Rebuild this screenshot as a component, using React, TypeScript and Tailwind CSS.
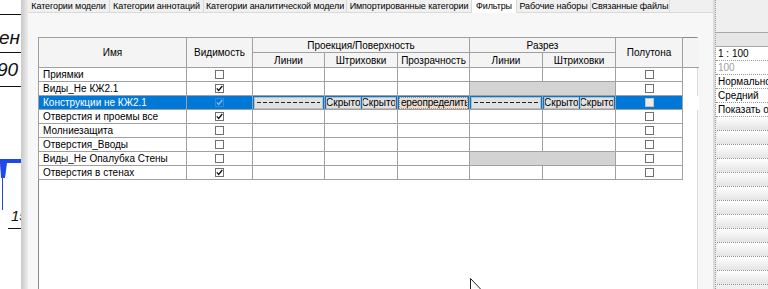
import React from "react";

type Row = { name: string; vis: boolean; hatch?: boolean; selected?: boolean };

const ROWS: Row[] = [
  { name: "Приямки", vis: false },
  { name: "Виды_Не КЖ2.1", vis: true, hatch: true },
  { name: "Конструкции не КЖ2.1", vis: true, selected: true },
  { name: "Отверстия и проемы все", vis: true },
  { name: "Молниезащита", vis: false },
  { name: "Отверстия_Вводы", vis: false },
  { name: "Виды_Не Опалубка Стены", vis: false, hatch: true },
  { name: "Отверстия в стенах", vis: true },
];

const TABS = [
  { label: "Категории модели", w: "w-[82px]" },
  { label: "Категории аннотаций", w: "w-[94px]" },
  { label: "Категории аналитической модели", w: "w-[143px]" },
  { label: "Импортированные категории", w: "w-[125px]" },
  { label: "Фильтры", w: "w-[45px]", active: true },
  { label: "Рабочие наборы", w: "w-[74px]" },
  { label: "Связанные файлы", w: "w-[79px]" },
];

const PROPS = [
  { text: "1 : 100" },
  { text: "100", muted: true },
  { text: "Нормально" },
  { text: "Средний" },
  { text: "Показать ор" },
];

const cell = "border border-[#a0a0a0] p-0";

const Box: React.FC<{ checked: boolean; tone?: "normal" | "selVis" | "selHalf" }> = ({
  checked,
  tone = "normal",
}) => {
  const boxCls =
    tone === "selVis"
      ? "border-[#2f8ae0] bg-transparent"
      : tone === "selHalf"
        ? "border-[#c4c4c4] bg-[#ebebeb]"
        : "border-[#707070] bg-white";
  const stroke = tone === "selVis" ? "#8cbde9" : "#111";
  return (
    <div className={`mx-auto w-[9px] h-[9px] border ${boxCls} flex items-center justify-center`}>
      {checked && (
        <svg width="7" height="7" viewBox="0 0 7 7">
          <path d="M0.8 3.4 L2.7 5.4 L6.3 1" fill="none" stroke={stroke} strokeWidth="1.3" />
        </svg>
      )}
    </div>
  );
};

const DashBtn = () => (
  <div className="h-[12px] mx-[1px] bg-[#e1e1e1] border border-[#bcbcbc] flex items-center px-[2px]">
    <svg className="w-full h-[3px]">
      <line x1="0" y1="1.5" x2="100%" y2="1.5" stroke="#222" strokeWidth="1" strokeDasharray="4 2" />
    </svg>
  </div>
);

const HiddenPair = () => (
  <div className="h-[12px] mx-[1px] flex gap-px">
    <div className="flex-1 bg-[#e1e1e1] border border-[#bcbcbc] flex items-center justify-center text-black overflow-hidden">
      Скрыто
    </div>
    <div className="flex-1 bg-[#e1e1e1] border border-[#bcbcbc] flex items-center justify-center text-black overflow-hidden">
      Скрыто
    </div>
  </div>
);

const Drawing = () => (
  <div className="w-[21px] h-full bg-white shrink-0 overflow-hidden">
    <svg width="21" height="289" className="block">
      <line x1="0" y1="14.5" x2="21" y2="14.5" stroke="#111" />
      <text x="-1" y="44" fontSize="19" fontStyle="italic" fontFamily="Liberation Sans, sans-serif" fill="#111">
        ен
      </text>
      <line x1="0" y1="52.5" x2="21" y2="52.5" stroke="#111" />
      <text x="-3" y="76" fontSize="19" fontStyle="italic" fontFamily="Liberation Sans, sans-serif" fill="#111">
        90
      </text>
      <line x1="0" y1="86.5" x2="21" y2="86.5" stroke="#111" />
      <rect x="0" y="159" width="21" height="4" fill="#1f48e6" />
      <polygon points="0,163 7,163 5,178 1,178" fill="#1f48e6" />
      <line x1="2.5" y1="163" x2="2.5" y2="210" stroke="#1f48e6" />
      <text x="11" y="221" fontSize="15" fontStyle="italic" fontFamily="Liberation Sans, sans-serif" fill="#111">
        15
      </text>
      <line x1="8" y1="228.5" x2="21" y2="228.5" stroke="#111" />
    </svg>
  </div>
);

const App: React.FC = () => {
  return (
    <div className="relative w-[768px] h-[289px] overflow-hidden flex bg-white font-['Liberation_Sans',Arial,sans-serif] text-[10px] leading-[11px] text-black">
      <Drawing />
      {/* window shadow */}
      <div className="w-[7px] shrink-0 bg-gradient-to-r from-[#c9c9c9] to-[#ececec]" />

      {/* dialog */}
      <div className="w-[685px] shrink-0 flex flex-col bg-[#f7f7f7]">
        <div className="h-[13px] flex bg-[#f0f0f0] border-b border-[#dadada] text-[9px] tracking-[-0.1px]">
          {TABS.map((t) => (
            <div
              key={t.label}
              className={`${t.w} shrink-0 flex items-center justify-center whitespace-nowrap border-r border-[#d9d9d9] ${
                t.active ? "bg-white -mb-px" : "bg-[#f0f0f0]"
              }`}
            >
              {t.label}
            </div>
          ))}
        </div>

        <div className="flex-1 pl-[10px] pt-[24px] min-h-0">
          <div className="w-[660px] h-full bg-white border-l border-t border-r border-l-[#8a8a8a] border-t-[#8a8a8a] border-r-[#dcdcdc]">
            <table className="table-fixed border-collapse w-[660px] -mt-px -ml-px">
              <colgroup>
                <col className="w-[148px]" />
                <col className="w-[66px]" />
                <col className="w-[72px]" />
                <col className="w-[73px]" />
                <col className="w-[72px]" />
                <col className="w-[73px]" />
                <col className="w-[73px]" />
                <col className="w-[67px]" />
                <col className="w-[16px]" />
              </colgroup>
              <thead className="bg-[#f4f4f4]">
                <tr className="h-[15px]">
                  <th rowSpan={2} className={`${cell} font-normal`}>Имя</th>
                  <th rowSpan={2} className={`${cell} font-normal`}>Видимость</th>
                  <th colSpan={3} className={`${cell} font-normal`}>Проекция/Поверхность</th>
                  <th colSpan={2} className={`${cell} font-normal`}>Разрез</th>
                  <th rowSpan={2} className={`${cell} font-normal`}>Полутона</th>
                  <th rowSpan={2} className="border-b border-[#a0a0a0] p-0" />
                </tr>
                <tr className="h-[15px]">
                  <th className={`${cell} font-normal`}>Линии</th>
                  <th className={`${cell} font-normal`}>Штриховки</th>
                  <th className={`${cell} font-normal`}>Прозрачность</th>
                  <th className={`${cell} font-normal`}>Линии</th>
                  <th className={`${cell} font-normal`}>Штриховки</th>
                </tr>
              </thead>
              <tbody>
                {ROWS.map((r) =>
                  r.selected ? (
                    <tr key={r.name} className="h-[14px] bg-[#0078d7]">
                      <td className={`${cell} pl-[4px] text-white whitespace-nowrap`}>{r.name}</td>
                      <td className={cell}>
                        <Box checked tone="selVis" />
                      </td>
                      <td className={cell}>
                        <DashBtn />
                      </td>
                      <td className={cell}>
                        <HiddenPair />
                      </td>
                      <td className={cell}>
                        <div className="h-[12px] mx-[1px] bg-[#ebddd1] border border-dotted border-[#b08a70] flex items-center pl-[1px] overflow-hidden whitespace-nowrap tracking-[-0.2px]">
                          ереопределить
                        </div>
                      </td>
                      <td className={cell}>
                        <DashBtn />
                      </td>
                      <td className={cell}>
                        <HiddenPair />
                      </td>
                      <td className={cell}>
                        <Box checked={false} tone="selHalf" />
                      </td>
                      <td className="p-0 bg-white" />
                    </tr>
                  ) : (
                    <tr key={r.name} className="h-[14px]">
                      <td className={`${cell} pl-[4px] whitespace-nowrap`}>{r.name}</td>
                      <td className={cell}>
                        <Box checked={r.vis} />
                      </td>
                      <td className={cell} />
                      <td className={cell} />
                      <td className={cell} />
                      {r.hatch ? (
                        <td
                          colSpan={2}
                          className={`${cell} bg-[repeating-conic-gradient(#b8b8b8_0_25%,#eeeeee_0_50%)] bg-[length:2px_2px]`}
                        />
                      ) : (
                        <>
                          <td className={cell} />
                          <td className={cell} />
                        </>
                      )}
                      <td className={cell}>
                        <Box checked={false} />
                      </td>
                      <td className="p-0" />
                    </tr>
                  )
                )}
              </tbody>
            </table>
          </div>
        </div>
      </div>

      {/* separator */}
      <div className="w-[2px] shrink-0 bg-[#dcdcdc]" />

      {/* properties panel */}
      <div className="w-[53px] shrink-0 flex flex-col bg-[#efefef] border-l border-dotted border-[#9a9a9a]">
        <div className="h-[32px] shrink-0" />
        <div className="h-[15px] shrink-0 bg-[#e6e6e6] border-t border-b border-[#a8a8a8]" />
        {PROPS.map((p) => (
          <div
            key={p.text}
            className={`h-[14px] shrink-0 bg-white border-b border-dotted border-[#9a9a9a] pl-[2px] flex items-center whitespace-nowrap overflow-hidden ${
              p.muted ? "text-[#a0a0a0]" : "text-black"
            }`}
          >
            {p.text}
          </div>
        ))}
        {Array.from({ length: 12 }).map((_, i) => (
          <div
            key={i}
            className="h-[14px] shrink-0 ml-[1px] rounded-tl-[3px] bg-gradient-to-b from-white to-[#e4e4e4] border-b border-dotted border-[#8f8f8f]"
          />
        ))}
      </div>

      {/* mouse pointer */}
      <svg className="absolute left-[470px] top-[278px]" width="12" height="19" viewBox="0 0 12 19">
        <path d="M0.5 0.5 L0.5 16 L4 12.5 L6.5 18 L8.5 17 L6 11.5 L11 11.5 Z" fill="#fff" stroke="#222" strokeWidth="1" />
      </svg>
    </div>
  );
};

export default App;
